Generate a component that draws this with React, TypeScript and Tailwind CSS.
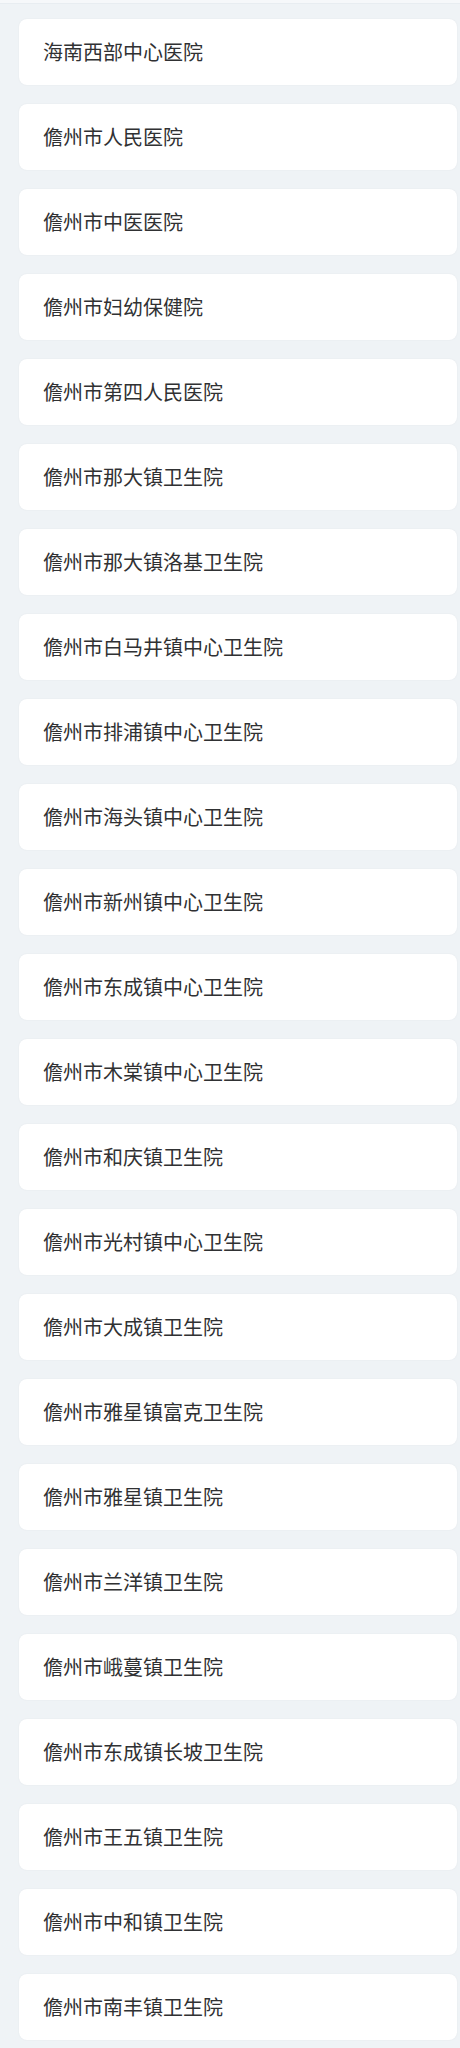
const hospitals = [
  "海南西部中心医院",
  "儋州市人民医院",
  "儋州市中医医院",
  "儋州市妇幼保健院",
  "儋州市第四人民医院",
  "儋州市那大镇卫生院",
  "儋州市那大镇洛基卫生院",
  "儋州市白马井镇中心卫生院",
  "儋州市排浦镇中心卫生院",
  "儋州市海头镇中心卫生院",
  "儋州市新州镇中心卫生院",
  "儋州市东成镇中心卫生院",
  "儋州市木棠镇中心卫生院",
  "儋州市和庆镇卫生院",
  "儋州市光村镇中心卫生院",
  "儋州市大成镇卫生院",
  "儋州市雅星镇富克卫生院",
  "儋州市雅星镇卫生院",
  "儋州市兰洋镇卫生院",
  "儋州市峨蔓镇卫生院",
  "儋州市东成镇长坡卫生院",
  "儋州市王五镇卫生院",
  "儋州市中和镇卫生院",
  "儋州市南丰镇卫生院",
];

const App = () => {
  return (
    <div
      className="min-h-[2048px] bg-[#eff3f6]"
      style={{ fontFamily: '"Noto Sans CJK SC", "Noto Sans", sans-serif' }}
    >
      <div className="h-[4px] bg-[#f6f8fa] border-b border-[#e8edf1]" />
      <div className="flex flex-col gap-[19px] pt-[15px] pb-4 pl-[19px] pr-[3px]">
        {hospitals.map((name) => (
          <div
            key={name}
            className="h-[66px] flex items-center pl-6 bg-white rounded-lg shadow-[0_0_2px_rgba(0,0,0,0.06)]"
          >
            <span className="text-[20px] text-[#303133] leading-none">{name}</span>
          </div>
        ))}
      </div>
    </div>
  );
};

export default App;
